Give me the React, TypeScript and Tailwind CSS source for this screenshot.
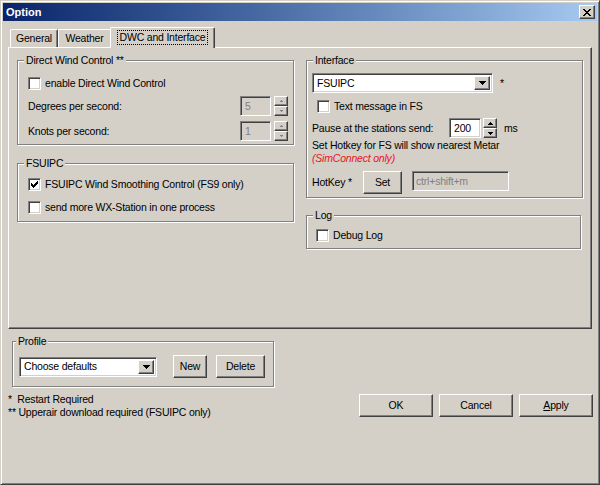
import React from "react";

const SUNKEN =
  "border border-t-[#808080] border-l-[#808080] border-r-white border-b-white shadow-[inset_1px_1px_0_#404040,inset_-1px_-1px_0_#d4d0c8]";
const RAISED =
  "border border-t-white border-l-white border-r-[#404040] border-b-[#404040] shadow-[inset_-1px_-1px_0_#808080]";
const ETCHED = "border border-[#808080] shadow-[inset_1px_1px_0_white,1px_1px_0_white]";

function Group({
  label,
  className,
  labelClass = "left-[6px]",
  children,
}: {
  label: string;
  className: string;
  labelClass?: string;
  children?: React.ReactNode;
}) {
  return (
    <div className={`relative ${ETCHED} ${className}`}>
      <span className={`absolute top-[-7px] bg-[#d4d0c8] px-[2px] leading-[13px] ${labelClass}`}>{label}</span>
      {children}
    </div>
  );
}

function Check({ checked, label }: { checked?: boolean; label: string }) {
  return (
    <div className="flex items-center h-[16px]">
      <div className={`w-[13px] h-[13px] bg-white ${SUNKEN} flex items-center justify-center shrink-0`}>
        {checked && (
          <svg width="7" height="7" viewBox="0 0 7 7" shapeRendering="crispEdges">
            <polygon points="0,2 2,4 7,-1 7,2 2,7 0,5" fill="#000" />
          </svg>
        )}
      </div>
      <span className="ml-[4px] leading-[13px]">{label}</span>
    </div>
  );
}

function Tri({ up, color, w = 5 }: { up?: boolean; color: string; w?: number }) {
  const h = Math.ceil(w / 2);
  return (
    <svg width={w} height={h} viewBox={`0 0 ${w} ${h}`} shapeRendering="crispEdges">
      <polygon points={up ? `0,${h} ${w},${h} ${w / 2},0` : `0,0 ${w},0 ${w / 2},${h}`} fill={color} />
    </svg>
  );
}

function Spin({ disabled }: { disabled?: boolean }) {
  const c = disabled ? "#808080" : "#000";
  return (
    <div className="flex flex-col w-[14px] h-[20px]">
      <div className={`flex-1 ${RAISED} bg-[#d4d0c8] flex items-center justify-center`}>
        <Tri up color={c} w={disabled ? 3 : 5} />
      </div>
      <div className={`flex-1 ${RAISED} bg-[#d4d0c8] flex items-center justify-center`}>
        <Tri color={c} w={disabled ? 3 : 5} />
      </div>
    </div>
  );
}

function Button({ children, className }: { children: React.ReactNode; className: string }) {
  return (
    <div className={`${RAISED} bg-[#d4d0c8] flex items-center justify-center leading-[13px] ${className}`}>
      {children}
    </div>
  );
}

function Combo({ text, className }: { text: string; className: string }) {
  return (
    <div className={`${SUNKEN} bg-white flex items-center p-[2px] ${className}`}>
      <span className="flex-1 pl-[2px] leading-[13px]">{text}</span>
      <div className={`w-[16px] h-full ${RAISED} bg-[#d4d0c8] flex items-center justify-center`}>
        <Tri color="#000" w={7} />
      </div>
    </div>
  );
}

export default function App() {
  return (
    <div className="w-[600px] h-[485px] bg-[#d4d0c8] text-[10.5px] tracking-[-0.2px] text-black font-['Tahoma','Liberation_Sans',Arial,sans-serif] border border-t-[#d4d0c8] border-l-[#d4d0c8] border-r-[#404040] border-b-[#404040] shadow-[inset_1px_1px_0_white,inset_-1px_-1px_0_#808080] p-[2px] flex flex-col">
      {/* Title bar */}
      <div className="h-[18px] bg-linear-to-r from-[#0a246a] to-[#a6caf0] flex items-center pl-[3px] pr-[2px]">
        <span className="text-white font-bold text-[11px] tracking-normal leading-[13px]">Option</span>
        <div className={`ml-auto w-[16px] h-[14px] ${RAISED} bg-[#d4d0c8] flex items-center justify-center`}>
          <svg width="8" height="7" viewBox="0 0 8 7" shapeRendering="crispEdges">
            <path d="M0 0h2v1h-2zM6 0h2v1h-2zM1 1h2v1h-2zM5 1h2v1h-2zM2 2h4v1h-4zM3 3h2v1h-2zM2 4h4v1h-4zM1 5h2v1h-2zM5 5h2v1h-2zM0 6h2v1h-2zM6 6h2v1h-2z" fill="#000" />
          </svg>
        </div>
      </div>

      {/* Tabs */}
      <div className="px-[5px] mt-[6px]">
        <div className="flex items-end h-[20px] pl-[2px] relative z-10">
          <div className="w-[48px] h-[18px] border-t border-l border-r border-t-white border-l-white border-r-[#404040] shadow-[inset_-1px_0_0_#808080] rounded-tl-[2px] rounded-tr-[2px] flex items-center justify-center leading-[13px]">
            General
          </div>
          <div className="w-[52px] h-[18px] border-t border-l border-t-white border-l-white rounded-tl-[2px] flex items-center justify-center leading-[13px]">
            Weather
          </div>
          <div className="w-[105px] h-[21px] -mb-px bg-[#d4d0c8] border-t border-l border-r border-t-white border-l-white border-r-[#404040] shadow-[inset_-1px_0_0_#808080] rounded-tl-[2px] rounded-tr-[2px] flex items-center justify-center pb-[1px]">
            <span className="border border-dotted border-black px-[2px] leading-[13px]">DWC and Interface</span>
          </div>
        </div>

        {/* Tab page */}
        <div className={`h-[282px] ${RAISED} flex pl-[8px] pr-[8px] pt-[12px] gap-[12px]`}>
          {/* left column */}
          <div className="w-[277px] flex flex-col gap-[18px]">
            <Group label="Direct Wind Control **" className="h-[85px] pl-[10px] pr-[5px] pt-[14px]">
              <Check label="enable Direct Wind Control" />
              <div className="flex items-center h-[20px] mt-[5px]">
                <span className="leading-[13px]">Degrees per second:</span>
                <div className="ml-auto flex items-center gap-[3px]">
                  <div className={`w-[31px] h-[20px] ${SUNKEN} bg-[#d4d0c8] flex items-center pl-[4px] text-[#808080] leading-[13px]`}>5</div>
                  <Spin disabled />
                </div>
              </div>
              <div className="flex items-center h-[20px] mt-[5px]">
                <span className="leading-[13px]">Knots per second:</span>
                <div className="ml-auto flex items-center gap-[3px]">
                  <div className={`w-[31px] h-[20px] ${SUNKEN} bg-[#d4d0c8] flex items-center pl-[4px] text-[#808080] leading-[13px]`}>1</div>
                  <Spin disabled />
                </div>
              </div>
            </Group>
            <Group label="FSUIPC" className="h-[59px] pl-[10px] pt-[12px] flex flex-col gap-[7px]">
              <Check checked label="FSUIPC Wind Smoothing Control (FS9 only)" />
              <Check label="send more WX-Station in one process" />
            </Group>
          </div>

          {/* right column */}
          <div className="w-[277px] flex flex-col gap-[17px]">
            <Group label="Interface" className="h-[138px] pl-[5px] pt-[12px] flex flex-col">
              <div className="flex items-center">
                <Combo text="FSUIPC" className="w-[181px] h-[20px]" />
                <span className="ml-[7px] leading-[13px]">*</span>
              </div>
              <div className="mt-[5px] pl-[5px]">
                <Check label="Text message in FS" />
              </div>
              <div className="flex items-center h-[20px] mt-[4px]">
                <span className="w-[137px] leading-[13px]">Pause at the stations send:</span>
                <div className={`w-[32px] h-[20px] ${SUNKEN} bg-white flex items-center pl-[4px] leading-[13px]`}>200</div>
                <div className="ml-[2px]">
                  <Spin />
                </div>
                <span className="ml-[7px] leading-[13px]">ms</span>
              </div>
              <div className="leading-[13px] mt-[1px]">Set Hotkey for FS will show nearest Metar</div>
              <div className="leading-[13px] text-[#e8141c] italic">(SimConnect only)</div>
              <div className="flex items-start mt-[6px]">
                <span className="w-[51px] h-[23px] flex items-center leading-[13px]">HotKey *</span>
                <Button className="w-[39px] h-[23px]">Set</Button>
                <div className={`ml-[10px] w-[97px] h-[20px] ${SUNKEN} bg-[#d4d0c8] flex items-center pl-[3px] text-[#808080] leading-[13px]`}>
                  ctrl+shift+m
                </div>
              </div>
            </Group>
            <Group label="Log" className="w-[275px] h-[34px] pl-[9px] pt-[11px]">
              <Check label="Debug Log" />
            </Group>
          </div>
        </div>
      </div>

      {/* Bottom */}
      <div className="flex">
        <div className="ml-[9px] mt-[12px] flex flex-col">
          <Group label="Profile" labelClass="left-[3px]" className="w-[262px] h-[46px] pl-[6px] pt-[13px]">
            <div className="flex items-center h-[23px]">
              <Combo text="Choose defaults" className="w-[138px] h-[20px]" />
              <Button className="ml-[16px] w-[34px] h-[23px]">New</Button>
              <Button className="ml-[9px] w-[49px] h-[23px]">Delete</Button>
            </div>
          </Group>
          <div className="mt-[6px] -ml-[4px] leading-[13px] whitespace-pre">*  Restart Required</div>
          <div className="-ml-[4px] leading-[13px]">** Upperair download required (FSUIPC only)</div>
        </div>
        <div className="ml-auto mr-[4px] mt-[65px] flex gap-[6px] items-start">
          <Button className="w-[74px] h-[23px]">OK</Button>
          <Button className="w-[74px] h-[23px]">Cancel</Button>
          <Button className="w-[74px] h-[23px]">
            <span>
              <span className="underline">A</span>pply
            </span>
          </Button>
        </div>
      </div>
    </div>
  );
}
